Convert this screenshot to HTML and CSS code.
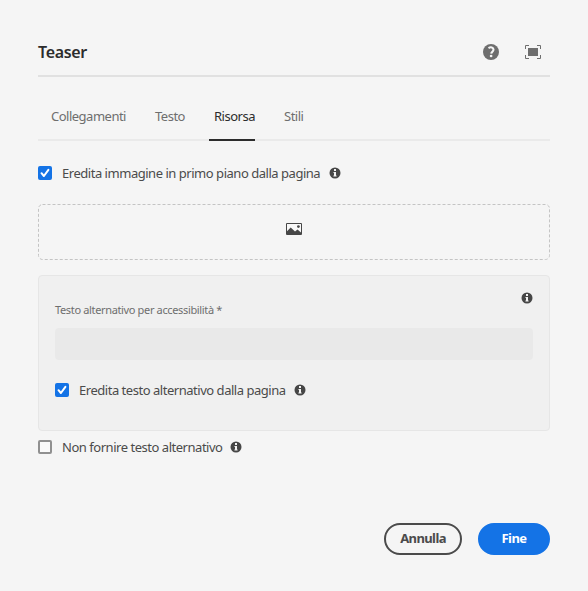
FILE: index.html
```html
<!DOCTYPE html>
<html lang="it">
<head>
<meta charset="utf-8">
<title>Teaser</title>
<link rel="stylesheet" href="styles.css">
</head>
<body>
<svg class="defs" aria-hidden="true">
  <symbol id="info" viewBox="0 0 12 12">
    <circle cx="6" cy="6" r="5.5" fill="#464646"/>
    <path d="M5 2h2v2H5zM4.5 5H7v3.500h.6v1H4.400v-1H5V6h-.5z" fill="#f4f4f4"/>
  </symbol>
  <symbol id="check" viewBox="0 0 14 14">
    <path d="M3.500 7.200 5.900 10 10.400 3.900" fill="none" stroke="#fff" stroke-width="2" stroke-linecap="round" stroke-linejoin="round"/>
  </symbol>
</svg>
<form class="dialog">
  <header class="header">
    <h1 class="title">Teaser</h1>
    <div class="actions">
      <svg width="16" height="16" viewBox="0 0 16 16"><circle cx="8" cy="8" r="8" fill="#6e6e6e"/><path d="M5.500 4.100C7.600 2.700 10.600 3.200 10.500 5.700 10.400 7.500 8.400 7.800 8.200 9.600" fill="none" stroke="#f5f5f5" stroke-width="2.100"/><circle cx="8.100" cy="12" r="1.350" fill="#f5f5f5"/></svg>
      <svg width="16" height="14" viewBox="0 0 16 14"><path d="M3 3h10v8H3z" fill="#6e6e6e"/><path d="M.5 4V.5H4M12 .5h3.500V4M15.500 10v3.500H12M4 13.500H.5V10" fill="none" stroke="#6e6e6e"/></svg>
    </div>
  </header>
  <nav class="tabs">
    <a class="tab tab-links">Collegamenti</a>
    <a class="tab tab-text">Testo</a>
    <a class="tab tab-asset selected">Risorsa</a>
    <a class="tab tab-styles">Stili</a>
  </nav>
  <div class="option inherit-image">
    <span class="box checked"><svg><use href="#check"/></svg></span>
    <span class="text">Eredita immagine in primo piano dalla pagina</span>
    <svg class="info"><use href="#info"/></svg>
  </div>
  <div class="dropzone">
    <svg class="outline" width="512" height="56"><rect x=".5" y=".5" width="511" height="55" rx="4"/></svg>
    <svg width="16" height="12" viewBox="0 0 16 12"><path d="M.5.5h15v11H.5z" fill="#f8f8f8" stroke="#464646"/><path d="M1 8.300 4.700 4.500 9 8.500 11.500 6.500 15 9.500V11H1z" fill="#464646"/><circle cx="12.400" cy="3.600" r="1.400" fill="#464646"/></svg>
  </div>
  <section class="well">
    <svg class="info well-info"><use href="#info"/></svg>
    <label class="label">Testo alternativo per accessibilità *</label>
    <div class="field"></div>
    <div class="option inherit-alt">
      <span class="box checked"><svg><use href="#check"/></svg></span>
      <span class="text">Eredita testo alternativo dalla pagina</span>
      <svg class="info"><use href="#info"/></svg>
    </div>
  </section>
  <div class="option no-alt">
    <span class="box"></span>
    <span class="text">Non fornire testo alternativo</span>
    <svg class="info"><use href="#info"/></svg>
  </div>
  <footer class="footer">
    <button type="button" class="button cancel">Annulla</button>
    <button type="button" class="button done">Fine</button>
  </footer>
</form>
</body>
</html>
```
FILE: styles.css
```css
* { box-sizing: border-box; }
body {
  margin: 0;
  background: #f5f5f5;
  color: #4b4b4b;
  font-family: "Noto Sans", sans-serif;
  font-size: 13px;
}
svg { display: block; flex: none; }
.defs { position: absolute; width: 0; height: 0; }
.dialog {
  width: 588px;
  height: 591px;
  padding: 28px 38px 36px;
  display: flex;
  flex-direction: column;
}
.header {
  height: 49px;
  border-bottom: 2px solid #e1e1e1;
  display: flex;
  align-items: center;
  justify-content: space-between;
}
.title { margin: 0; font-size: 16px; font-weight: 600; color: #2c2c2c; letter-spacing: -.35px; }
.actions { display: flex; align-items: center; gap: 26px; padding-right: 9px; }
.tabs {
  height: 64px;
  padding: 16px 8px 0;
  border-bottom: 2px solid #eaeaea;
  display: flex;
  gap: 19px;
}
.tab {
  height: 48px;
  padding: 0 5px;
  line-height: 47px;
  color: #6e6e6e;
  white-space: nowrap;
  letter-spacing: -.5px;
}
.tab-links { width: 85px; }
.tab-text { width: 40px; }
.tab-asset { width: 46px; }
.tab-styles { width: 32px; margin-left: 5px; }
.tab.selected { color: #2c2c2c; border-bottom: 2px solid #2c2c2c; }
.option { height: 20px; display: flex; align-items: center; }
.box {
  width: 14px;
  height: 14px;
  border: 2px solid #909090;
  border-radius: 2px;
  background: #fafafa;
}
.box.checked { border: 0; background: #1473e6; }
.box svg { width: 14px; height: 14px; }
.text { margin-left: 10px; white-space: nowrap; line-height: 20px; letter-spacing: -.47px; }
.info { width: 12px; height: 12px; margin-left: 8px; }
.inherit-image { margin-top: 22px; }
.inherit-image .text { width: 259px; }
.dropzone {
  position: relative;
  height: 56px;
  margin-top: 21px;
  padding-top: 19px;
  display: flex;
  justify-content: center;
}
.outline { position: absolute; inset: 0; }
.outline rect { fill: none; stroke: #c4c4c4; stroke-dasharray: 3 2; }
.well {
  position: relative;
  height: 156px;
  margin-top: 15px;
  padding: 24px 16px 0;
  border: 1px solid #e6e6e6;
  border-radius: 4px;
  background: #f0f0f0;
}
.well-info { position: absolute; top: 16px; right: 16px; margin: 0; }
.label { display: block; height: 28px; line-height: 20px; font-size: 11px; color: #6e6e6e; letter-spacing: -.35px; }
.field { height: 32px; border-radius: 4px; background: #e9e9e9; }
.inherit-alt { margin-top: 20px; }
.inherit-alt .text { width: 207px; }
.no-alt { margin-top: 6px; }
.no-alt .text { width: 160px; }
.footer { margin-top: auto; display: flex; justify-content: flex-end; gap: 16px; }
.button {
  height: 32px;
  padding: 0 0 2px;
  border: 2px solid #4b4b4b;
  border-radius: 16px;
  background: none;
  color: #4b4b4b;
  font: 700 13px "Noto Sans", sans-serif;
  letter-spacing: -.6px;
}
.cancel { width: 78px; }
.done { width: 72px; border-color: #1473e6; background: #1473e6; color: #fff; }
```
